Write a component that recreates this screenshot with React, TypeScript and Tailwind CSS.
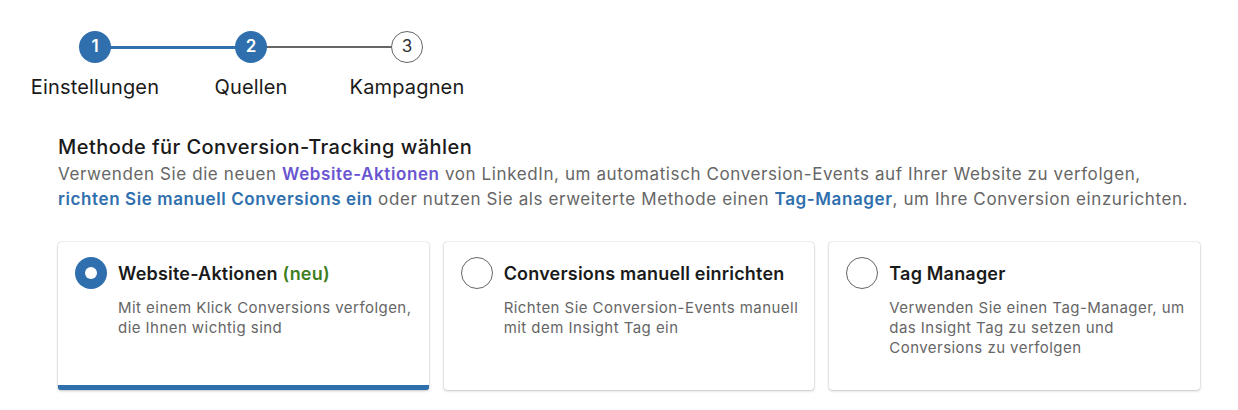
const steps = [
  { n: 1, label: "Einstellungen", done: true },
  { n: 2, label: "Quellen", done: true },
  { n: 3, label: "Kampagnen", done: false },
];

const options = [
  {
    title: "Website-Aktionen",
    badge: "(neu)",
    text: "Mit einem Klick Conversions verfolgen, die Ihnen wichtig sind",
    selected: true,
  },
  {
    title: "Conversions manuell einrichten",
    text: "Richten Sie Conversion-Events manuell mit dem Insight Tag ein",
    selected: false,
  },
  {
    title: "Tag Manager",
    text: "Verwenden Sie einen Tag-Manager, um das Insight Tag zu setzen und Conversions zu verfolgen",
    selected: false,
  },
];

const Stepper = () => (
  <div className="flex pl-[17px] pt-[31px]">
    {steps.map((s, i) => (
      <div key={s.n} className="relative flex w-[156px] flex-col items-center">
        {i < steps.length - 1 && (
          <div
            className={`absolute left-[78px] w-[156px] ${
              s.n === 1 ? "top-[15px] h-[3px] bg-[#2f6fad]" : "top-[15px] h-[2px] bg-[#666]"
            }`}
          />
        )}
        <div
          className={`relative z-10 flex h-[32px] w-[32px] items-center justify-center rounded-full text-[17px] ${
            s.done
              ? "bg-[#2f6fad] font-semibold text-white"
              : "border border-[#666] bg-white text-[#333]"
          }`}
        >
          {s.n}
        </div>
        <div className="mt-[12px] text-[20px] leading-[24px] tracking-[0.15px] text-[#1a1a1a]">{s.label}</div>
      </div>
    ))}
  </div>
);

const Radio = ({ on }: { on: boolean }) =>
  on ? (
    <div className="flex h-[32px] w-[32px] shrink-0 items-center justify-center rounded-full bg-[#2f6fad]">
      <div className="h-[12px] w-[12px] rounded-full bg-white" />
    </div>
  ) : (
    <div className="h-[32px] w-[32px] shrink-0 rounded-full border border-[#666] bg-white" />
  );

export default function App() {
  return (
    <div className="min-h-[410px] bg-white font-['Inter','Liberation_Sans',sans-serif]">
      <Stepper />

      <div className="pl-[58px] pr-[38px] pt-[35px]">
        <h2 className="text-[20px] font-medium leading-[26px] tracking-[0.45px] text-[#1a1a1a]">
          Methode für Conversion-Tracking wählen
        </h2>
        <p className="mt-[2px] whitespace-nowrap text-[17px] leading-[25px] tracking-[0.6px] text-[#666]">
          Verwenden Sie die neuen <span className="font-semibold text-[#6a55d1]">Website-Aktionen</span> von
          LinkedIn, um automatisch Conversion-Events auf Ihrer Website zu verfolgen,
          <br />
          <span className="font-semibold text-[#2f6fad]">richten Sie manuell Conversions ein</span> oder nutzen
          Sie als erweiterte Methode einen <span className="font-semibold text-[#2f6fad]">Tag-Manager</span>, um
          Ihre Conversion einzurichten.
        </p>

        <div className="mt-[30px] grid grid-cols-3 gap-[15px]">
          {options.map((o) => (
            <div
              key={o.title}
              className={`h-[148px] rounded-[3px] bg-white pl-[17px] pr-[12px] pt-[15px] shadow-[0_0_1px_rgba(0,0,0,0.35),0_1px_3px_rgba(0,0,0,0.2)] ${
                o.selected ? "border-b-[5px] border-[#2f6fad]" : ""
              }`}
            >
              <div className="flex items-center gap-[11px]">
                <Radio on={o.selected} />
                <div className="text-[18px] font-semibold tracking-[0.2px] text-[#1a1a1a]">
                  {o.title}
                  {o.badge && <span className="text-[#3f7f1f]"> {o.badge}</span>}
                </div>
              </div>
              <p className="mt-[9px] pl-[43px] text-[15px] leading-[20px] tracking-[0.45px] text-[#666]">
                {o.text}
              </p>
            </div>
          ))}
        </div>
      </div>
    </div>
  );
}
